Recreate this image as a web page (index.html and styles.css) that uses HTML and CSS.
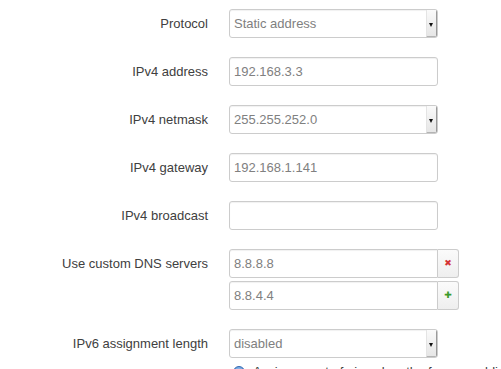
FILE: index.html
```html
<!DOCTYPE html>
<html>
<head>
<meta charset="utf-8">
<link rel="stylesheet" href="styles.css">
</head>
<body>
<div class="form">
  <div class="row">
    <div class="label">Protocol</div>
    <div class="field">
      <div class="select"><span class="val">Static address</span><span class="arrow"></span></div>
    </div>
  </div>
  <div class="row">
    <div class="label">IPv4 address</div>
    <div class="field"><div class="input">192.168.3.3</div></div>
  </div>
  <div class="row">
    <div class="label">IPv4 netmask</div>
    <div class="field">
      <div class="select"><span class="val">255.255.252.0</span><span class="arrow"></span></div>
    </div>
  </div>
  <div class="row">
    <div class="label">IPv4 gateway</div>
    <div class="field"><div class="input">192.168.1.141</div></div>
  </div>
  <div class="row">
    <div class="label">IPv4 broadcast</div>
    <div class="field"><div class="input"></div></div>
  </div>
  <div class="row">
    <div class="label">Use custom DNS servers</div>
    <div class="field dns">
      <div class="group">
        <div class="input grouped">8.8.8.8</div>
        <div class="addon del">&#x2716;</div>
      </div>
      <div class="group">
        <div class="input grouped">8.8.4.4</div>
        <div class="addon add">&#x271A;</div>
      </div>
    </div>
  </div>
  <div class="row">
    <div class="label">IPv6 assignment length</div>
    <div class="field">
      <div class="select"><span class="val">disabled</span><span class="arrow"></span></div>
      <div class="help"><span class="info"></span><span class="help-text">Assign a part of given length of every public IPv6-prefix to this interface</span></div>
    </div>
  </div>
</div>
</body>
</html>
```

FILE: styles.css
```css
html, body {
  margin: 0;
  padding: 0;
  background: #ffffff;
  overflow: hidden;
}
body {
  font-family: "Liberation Sans", Arial, sans-serif;
  font-size: 13px;
  color: #404040;
}
.form {
  padding-top: 9px;
}
.row {
  display: grid;
  grid-template-columns: 208px 209px;
  column-gap: 21px;
  align-items: start;
  margin-bottom: 19px;
}
.label {
  text-align: right;
  height: 29px;
  padding-top: 1px;
  box-sizing: border-box;
  line-height: 28px;
  white-space: nowrap;
  color: #404040;
}
.input, .select {
  box-sizing: border-box;
  height: 29px;
  border: 1px solid #cccccc;
  border-radius: 3px;
  box-shadow: inset 0 1px 1px rgba(0,0,0,0.06);
  padding: 0 4px;
  line-height: 28px;
  color: #808080;
  background: #fff;
  white-space: nowrap;
}
.select {
  display: flex;
  padding-right: 0;
  overflow: hidden;
}
.select .val {
  flex: 1;
}
.select .arrow {
  position: relative;
  width: 9px;
  border-left: 1px solid #e4e4e4;
  border-right: 2px solid #9a9a9a;
  border-bottom: 2px solid #b4b4b4;
  background: linear-gradient(#fafafa, #e6e6e6);
  margin-right: -1px;
  margin-bottom: -1px;
}
.select .arrow::after {
  content: "";
  position: absolute;
  left: 2px;
  top: 13px;
  border-left: 2.5px solid transparent;
  border-right: 2.5px solid transparent;
  border-top: 4px solid #111;
}
.dns {
  display: flex;
  flex-direction: column;
  gap: 3px;
}
.group {
  display: flex;
  width: 230px;
}
.input.grouped {
  width: 209px;
  border-radius: 3px 0 0 3px;
}
.addon {
  box-sizing: border-box;
  width: 21px;
  height: 29px;
  border: 1px solid #cccccc;
  border-left: none;
  border-radius: 0 3px 3px 0;
  background: linear-gradient(#fbfbfb, #eeeeee);
  text-align: center;
  line-height: 27px;
  font-family: "DejaVu Sans", sans-serif;
  font-size: 9px;
  font-weight: bold;
}
.addon.del {
  color: #d43333;
}
.addon.add {
  color: #3a9a2a;
}
.help {
  margin-top: 6px;
  width: 272px;
  overflow: hidden;
  white-space: nowrap;
  color: #404040;
  display: flex;
  align-items: flex-start;
  line-height: 16px;
}
.info {
  flex-shrink: 0;
  display: inline-block;
  width: 12px;
  height: 12px;
  border-radius: 50%;
  background: radial-gradient(circle at 50% 35%, #9cc3ee, #3f7fcf);
  border: 1px solid #2f66b0;
  margin: 2px 8px 0 4px;
  box-sizing: border-box;
}
```
